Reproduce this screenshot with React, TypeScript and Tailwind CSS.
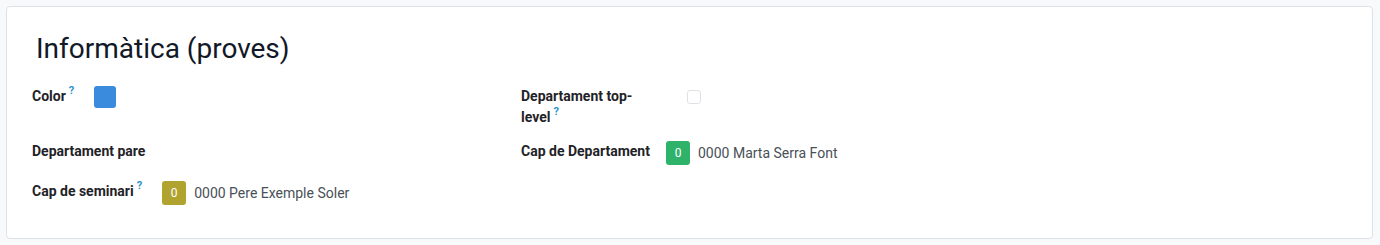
const Help = () => (
  <sup className="ml-[3px] text-[11px] leading-none font-bold text-[#2a93cc] -top-[0.6em]">?</sup>
);

const Label = ({ children, help }: { children: React.ReactNode; help?: boolean }) => (
  <div className="text-[14px] leading-[21px] font-bold text-[#1f2328]">
    {children}
    {help && <Help />}
  </div>
);

const Avatar = ({ name, bg }: { name: string; bg: string }) => (
  <div className="flex items-center">
    <span className={`flex h-6 w-6 items-center justify-center rounded-[3px] text-[12px] text-white ${bg}`}>0</span>
    <span className="ml-2 text-[14px] leading-[21px] text-[#495057]">{name}</span>
  </div>
);

export default function App() {
  return (
    <div className="min-h-[245px] bg-[#f8f9fa] p-[6px] pr-[7px] font-['Roboto',sans-serif]">
      <div className="rounded-[4px] border border-[#dee2e6] bg-white pl-[25px] pt-[25px] pb-[33px]">
        <h1 className="ml-[4px] text-[28px] leading-[34px] font-normal text-[#111827]">Informàtica (proves)</h1>
        <div className="mt-[20px] grid grid-cols-[489px_1fr]">
          {/* row 1 */}
          <div className="flex h-[55px] items-start">
            <Label help>Color</Label>
            <span className="ml-[20px] h-[22px] w-[22px] rounded-[3px] bg-[#3a8bdd]" />
          </div>
          <div className="flex h-[55px] items-start">
            <div className="w-[145px] pr-4">
              <Label help>Departament top-level</Label>
            </div>
            <span className="ml-[21px] mt-[4px] h-[14px] w-[14px] rounded-[3px] border border-[#dee2e6] bg-white" />
          </div>
          {/* row 2 */}
          <div className="flex h-[40px] items-start">
            <Label>Departament pare</Label>
          </div>
          <div className="flex h-[40px] items-start">
            <div className="w-[145px]">
              <Label>Cap de Departament</Label>
            </div>
            <Avatar name="0000 Marta Serra Font" bg="bg-[#2fb36b]" />
          </div>
          {/* row 3 */}
          <div className="flex items-start">
            <Label help>Cap de seminari</Label>
            <div className="ml-[20px]">
              <Avatar name="0000 Pere Exemple Soler" bg="bg-[#b1a32f]" />
            </div>
          </div>
          <div />
        </div>
      </div>
    </div>
  );
}
